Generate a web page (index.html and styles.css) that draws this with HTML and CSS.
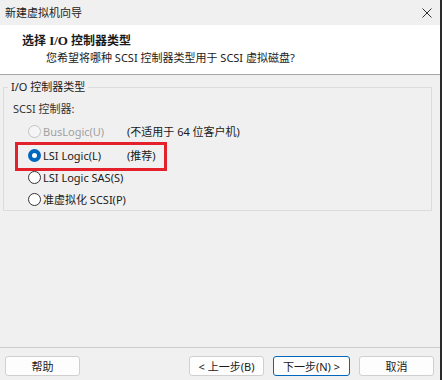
FILE: index.html
```html
<!DOCTYPE html>
<html lang="zh-CN">
<head>
    <meta charset="UTF-8">
    <title>新建虚拟机向导</title>
    <link rel="stylesheet" href="styles.css">
</head>
<body>
    <div class="window">
        <!-- 标题栏 -->
        <div class="titlebar">
            <span>新建虚拟机向导</span>
            <svg class="close" width="10" height="10" viewBox="0 0 10 10">
                <path d="M0.5 0.5 L9.5 9.5 M9.5 0.5 L0.5 9.5" stroke="#333" stroke-width="1" fill="none"/>
            </svg>
        </div>

        <!-- 页头 -->
        <div class="header">
            <div class="title">选择 <span class="serif">I/O</span> 控制器类型</div>
            <div class="subtitle">您希望将哪种 SCSI 控制器类型用于 SCSI 虚拟磁盘?</div>
        </div>

        <div class="content">
            <fieldset class="group">
                <legend>I/O 控制器类型</legend>
                <div class="label">SCSI 控制器:</div>
                <div class="row disabled">
                    <span class="radio"></span>
                    <span class="name">BusLogic(U)</span>
                    <span class="note">(不适用于 64 位客户机)</span>
                </div>
                <div class="row first">
                    <span class="radio checked"></span>
                    <span class="name">LSI Logic(L)</span>
                    <span class="note">(推荐)</span>
                </div>
                <div class="row">
                    <span class="radio"></span>
                    <span class="name">LSI Logic SAS(S)</span>
                </div>
                <div class="row">
                    <span class="radio"></span>
                    <span class="name">准虚拟化 SCSI(P)</span>
                </div>
            </fieldset>
        </div>

        <div class="footer">
            <button class="btn">帮助</button>
            <button class="btn push">&lt; 上一步(B)</button>
            <button class="btn default">下一步(N) &gt;</button>
            <button class="btn">取消</button>
        </div>

        <!-- 红框标注 -->
        <div class="mark"></div>
    </div>
</body>
</html>
```

FILE: styles.css
```css
body {
    margin: 0;
    font-family: "Noto Sans", "Noto Sans CJK SC", sans-serif;
    font-size: 11px;
    color: #1a1a1a;
    background: #f0f0f0;
}

.window {
    position: relative;
    width: 440px;
    height: 380px;
    border-right: 2px solid #2a2a2a;
    background: #f0f0f0;
    display: flex;
    flex-direction: column;
}

.titlebar {
    height: 25px;
    display: flex;
    align-items: center;
    justify-content: space-between;
    padding: 0 8px 0 5px;
    background: #f0f0f0;
    line-height: 16px;
}

.header {
    height: 50px;
    background: #fff;
    border-bottom: 1px solid #a6a6a6;
    padding: 7px 0 0 22px;
    box-sizing: border-box;
}

.title {
    font-size: 12px;
    font-weight: bold;
    line-height: 17px;
}

.serif {
    font-family: "Liberation Serif", serif;
    font-size: 13px;
}

.subtitle {
    padding-left: 24px;
    line-height: 17px;
}

.content {
    flex: 1;
    padding: 4px 8px 0 3px;
}

.group {
    margin: 0;
    padding: 0;
    border: 1px solid #dcdcdc;
    min-width: 0;
}

.group legend {
    margin-left: 4px;
    padding: 0 3px;
    line-height: 16px;
}

.label {
    margin-top: 6px;
    padding-left: 9px;
    line-height: 16px;
    color: #333;
}

.row {
    display: flex;
    align-items: center;
    gap: 2px;
    height: 22px;
    padding-left: 24px;
    white-space: nowrap;
}

.row.disabled {
    margin-top: 3px;
}

.row.first {
    margin-top: 2px;
}

.name {
    min-width: 82px;
}

.disabled .name {
    color: #a0a0a0;
}

.radio {
    flex: none;
    width: 11px;
    height: 11px;
    border: 1px solid #333;
    border-radius: 50%;
    background: #fff;
    box-sizing: content-box;
}

.disabled .radio {
    border-color: #c4c4c4;
    background: #f5f5f5;
}

.radio.checked {
    width: 5px;
    height: 5px;
    border: 4px solid #0067c0;
    background: #fff;
}

.footer {
    height: 33px;
    border-top: 1px solid #cdcdcd;
    box-sizing: border-box;
    display: flex;
    align-items: flex-start;
    padding: 8px 6px 0 5px;
}

.btn {
    width: 75px;
    height: 20px;
    padding: 0;
    font-family: inherit;
    font-size: 11px;
    color: #1a1a1a;
    background: #fdfdfd;
    border: 1px solid #d0d0d0;
    border-radius: 3px;
    margin-left: 9px;
}

.btn:first-child {
    margin-left: 0;
}

.btn.push {
    margin-left: auto;
}

.btn.default {
    width: 77px;
    border-color: #0067c0;
}

.mark {
    position: absolute;
    left: 15px;
    top: 142px;
    width: 152px;
    height: 29px;
    border: 3px solid #e4202a;
    box-sizing: border-box;
}
```
